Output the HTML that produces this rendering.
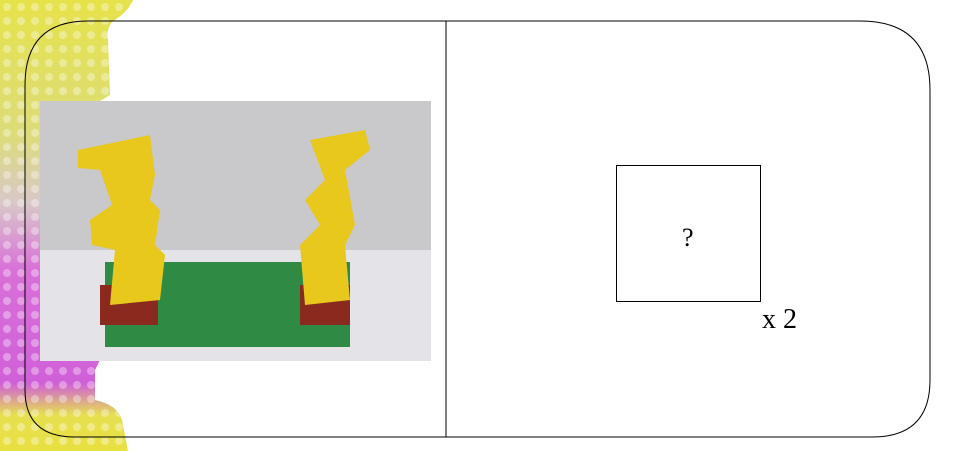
<html><head><style>
body{margin:0;width:959px;height:451px;background:#fff;position:relative;overflow:hidden;font-family:"Liberation Serif",serif}
.a{position:absolute}
</style></head><body>
<svg class="a" style="left:0;top:0" width="959" height="451">
<defs>
<linearGradient id="g" x1="0" y1="0" x2="0" y2="1">
<stop offset="0" stop-color="#e6e24a"/><stop offset="0.3" stop-color="#dcdc7a"/><stop offset="0.45" stop-color="#d8c8c8"/><stop offset="0.6" stop-color="#d870d8"/><stop offset="0.85" stop-color="#d060d8"/><stop offset="0.92" stop-color="#e6e050"/><stop offset="1" stop-color="#e8e040"/>
</linearGradient>
<pattern id="p" width="14" height="14" patternUnits="userSpaceOnUse"><circle cx="7" cy="7" r="4" fill="#fff" opacity="0.35"/></pattern>
</defs>
<path d="M0,0 L133,0 Q128,12 112,22 Q106,30 108,40 L110,95 L100,101 L100,360 L95,370 L95,400 Q118,405 122,420 L128,451 L0,451 Z" fill="url(#g)"/>
<path d="M0,0 L133,0 Q128,12 112,22 Q106,30 108,40 L110,95 L100,101 L100,360 L95,370 L95,400 Q118,405 122,420 L128,451 L0,451 Z" fill="url(#p)"/>
<path d="M88,21 L860,21 Q930,21 930,90 L930,380 Q930,437 872,437 L75,437 Q25,437 25,390 L25,85 Q25,21 88,21 Z" fill="none" stroke="#000" stroke-width="1"/>
<line x1="446" y1="21" x2="446" y2="437" stroke="#000"/>
<rect x="40" y="101" width="391" height="260" fill="#c9c9cc"/>
<rect x="40" y="250" width="391" height="111" fill="#e4e4e8"/>
<rect x="105" y="262" width="245" height="85" fill="#2f8a44"/>
<rect x="100" y="285" width="58" height="40" fill="#8a2a1e"/>
<rect x="300" y="285" width="50" height="40" fill="#8a2a1e"/>
<polygon points="78,150 150,135 155,175 150,200 160,210 155,245 165,255 160,300 110,305 115,250 92,245 90,220 112,205 100,170 78,168" fill="#e8c81c"/>
<polygon points="310,140 365,130 370,150 345,170 355,225 345,245 350,300 305,305 300,245 320,225 305,200 325,180" fill="#e8c81c"/>
<rect x="616.5" y="165.5" width="144" height="136" fill="none" stroke="#000"/>
</svg>
<div class="a" style="left:682px;top:223px;font-size:26px">?</div>
<div class="a" style="left:762px;top:304px;font-size:28px">x 2</div>
</body></html>
